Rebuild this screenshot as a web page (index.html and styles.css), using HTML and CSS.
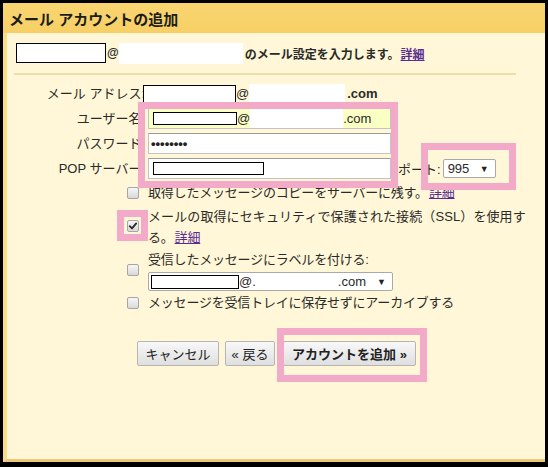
FILE: index.html
```html
<!DOCTYPE html>
<html lang="ja">
<head>
<meta charset="utf-8">
<title>メール アカウントの追加</title>
<link rel="stylesheet" href="styles.css">
</head>
<body>
<div class="frame">
  <div class="header">メール アカウントの追加</div>
  <div class="panel">
    <div class="intro">
      <span class="redact intro-box"></span>
      <span class="at-bold">@</span>
      <span class="white intro-white"></span>
      <span class="intro-text">のメール設定を入力します。</span>
      <a class="link" href="#">詳細</a>
    </div>
    <div class="sep"></div>
    <div class="form">
      <div class="row r25">
        <div class="lab">メール アドレス:</div>
        <div class="fld email-fld">
          <span class="redact email-box"></span>
          <span class="at">@</span>
          <span class="white email-white"></span>
          <span class="dom">.com</span>
        </div>
      </div>
      <div class="row r25">
        <div class="lab">ユーザー名:</div>
        <div class="fld">
          <div class="input autofill">
            <span class="redact user-box"></span>
            <span class="at">@</span>
            <span class="white user-white"></span>
            <span class="plain-dom">.com</span>
          </div>
        </div>
      </div>
      <div class="row r25">
        <div class="lab">パスワード:</div>
        <div class="fld">
          <div class="input"><span class="dots">••••••••</span></div>
        </div>
      </div>
      <div class="row r25">
        <div class="lab">POP サーバー:</div>
        <div class="fld">
          <div class="input"><span class="redact pop-box"></span></div>
          <span class="port-lab">ポート:</span>
          <div class="select port-select"><span>995</span><span class="arrow">▼</span></div>
        </div>
      </div>
      <div class="row r-cb1">
        <div class="lab cb-lab"><span class="cb"></span></div>
        <div class="fld txt">取得したメッセージのコピーをサーバーに残す。<a class="link" href="#">詳細</a></div>
      </div>
      <div class="row r-cb2">
        <div class="lab cb-lab"><span class="cb checked"><svg viewBox="0 0 12 12" width="12" height="12"><path d="M2.8 6.2 L5 8.4 L9.2 3.4" stroke="#2b2b2b" stroke-width="1.9" fill="none" stroke-linecap="round" stroke-linejoin="round"/></svg></span></div>
        <div class="fld txt block"><span class="wide">メールの取得にセキュリティで保護された接続（SSL）を使用す</span><br>る。<a class="link" href="#">詳細</a></div>
      </div>
      <div class="row r-cb3">
        <div class="lab cb-lab"><span class="cb"></span></div>
        <div class="fld txt block">
          <div class="line">受信したメッセージにラベルを付ける:</div>
          <div class="select label-select">
            <span class="redact label-box"></span>
            <span class="at">@.</span>
            <span class="white label-white"></span>
            <span class="plain-dom">.com</span>
            <span class="arrow">▼</span>
          </div>
        </div>
      </div>
      <div class="row r-cb4">
        <div class="lab cb-lab"><span class="cb"></span></div>
        <div class="fld txt">メッセージを受信トレイに保存せずにアーカイブする</div>
      </div>
    </div>
    <div class="buttons">
      <button class="btn btn-cancel">キャンセル</button>
      <button class="btn btn-back">« 戻る</button>
      <button class="btn btn-add">アカウントを追加 »</button>
    </div>
  </div>
  <div class="mark mark-fields"></div>
  <div class="mark mark-port"></div>
  <div class="mark mark-ssl"></div>
  <div class="mark mark-add"></div>
</div>
</body>
</html>
```

FILE: styles.css
```css
* { box-sizing: border-box; }
html, body { margin: 0; padding: 0; background: #000; }
body {
  width: 548px;
  height: 467px;
  overflow: hidden;
  font-family: "Liberation Sans", "Noto Sans CJK JP", sans-serif;
  font-size: 13px;
  color: #2a2a2a;
}
.frame {
  position: relative;
  width: 548px;
  height: 467px;
  border: 3px solid #000;
  border-bottom-width: 5px;
  display: flex;
  flex-direction: column;
  background: #fff7d7;
}
.header {
  flex: none;
  height: 30px;
  padding: 4px 0 0 6px;
  line-height: 26px;
  font-size: 15px;
  font-weight: bold;
  color: #1c1c1c;
  background: linear-gradient(#f9d570, #f7cf66);
}
.panel {
  flex: 1;
  border-left: 4px solid #fadd88;
  border-bottom: 3px solid #eac978;
  background: #fff7d7;
}
.intro {
  display: flex;
  align-items: center;
  height: 22px;
  margin: 9px 0 0 9px;
  font-size: 12px;
  font-weight: bold;
}
.redact { display: block; flex: none; background: #fff; border: 1px solid #000; }
.white { display: block; flex: none; background: #fff; }
.intro-box { width: 90px; height: 20px; }
.at-bold { margin-left: 1px; }
.intro-white { width: 124px; height: 21px; }
.intro-text { margin-left: 2px; }
.link { color: #5a2c91; text-decoration: underline; margin-left: 1px; }
.sep { width: 502px; height: 2px; margin: 9px 0 0 7px; background: #ebdfa9; }
.form { margin-top: 6px; }
.row { display: flex; }
.lab {
  flex: none;
  width: 138px;
  text-align: right;
  white-space: nowrap;
}
.fld { flex: none; width: 395px; display: flex; align-items: center; }
.r25 { height: 25px; align-items: center; }
.r25 .lab { line-height: 25px; }
.email-fld { margin-left: -2px; }
.email-box { width: 93px; height: 18px; }
.email-white { width: 96px; height: 19px; }
.dom { font-weight: bold; margin-left: 2px; }
.input {
  display: flex;
  align-items: center;
  width: 243px;
  height: 21px;
  margin-left: 3px;
  padding-left: 4px;
  border: 1px solid #c2c2c2;
  border-top-color: #9c9c9c;
  background: #fff;
}
.autofill { background: #faffc4; }
.user-box { width: 84px; height: 13px; }
.user-white { width: 93px; align-self: stretch; }
.dots { margin-left: -2px; font-weight: bold; color: #222; letter-spacing: 0; }
.pop-box { width: 111px; height: 13px; }
.port-lab { margin-left: 7px; white-space: nowrap; }
.select {
  display: flex;
  align-items: center;
  background: #fff;
  border: 1px solid #a9a9a9;
  border-radius: 2px;
}
.port-select {
  width: 53px;
  height: 19px;
  margin-left: 2px;
  padding: 0 6px 0 4px;
  justify-content: space-between;
}
.arrow { font-size: 9px; color: #222; }
.cb-lab { display: flex; align-items: center; justify-content: flex-end; padding-right: 6px; }
.cb {
  display: block;
  width: 12px;
  height: 12px;
  border: 1px solid #a6a6a6;
  border-radius: 2px;
  background: linear-gradient(#f6f6f6, #d9d9d9);
}
.cb svg { display: block; margin: -1px 0 0 -1px; }
.txt { padding-left: 3px; letter-spacing: -0.2px; white-space: nowrap; }
.block { display: block; }
.wide { letter-spacing: 0.1px; }
.r-cb1 { height: 23px; }
.r-cb1 .fld { line-height: 23px; }
.r-cb2 { height: 44px; }
.r-cb2 .fld { padding-top: 2px; line-height: 21px; }
.r-cb3 { height: 44px; }
.r-cb3 .fld { padding-top: 2px; }
.line { line-height: 20px; height: 20px; }
.label-select {
  width: 245px;
  height: 19px;
  margin-top: 2px;
  padding: 0 6px 0 2px;
  letter-spacing: 0;
}
.label-box { width: 88px; height: 14px; }
.label-white { width: 82px; align-self: stretch; }
.label-select .arrow { margin-left: auto; }
.r-cb4 { height: 22px; }
.r-cb4 .fld { line-height: 22px; }
.buttons { display: flex; margin: 27px 0 0 130px; }
.btn {
  height: 25px;
  padding: 0;
  border: 1px solid #b5b5b5;
  border-radius: 2px;
  background: linear-gradient(#f8f8f8, #dfdfdf);
  font-family: "Liberation Sans", "Noto Sans CJK JP", sans-serif;
  font-size: 13px;
  color: #222;
  display: flex;
  align-items: center;
  justify-content: center;
}
.btn-cancel { width: 82px; }
.btn-back { width: 50px; margin-left: 6px; }
.btn-add { width: 133px; margin-left: 8px; font-weight: bold; }
.mark { position: absolute; border: 7px solid #f3a9c8; }
.mark-fields { left: 135px; top: 99px; width: 260px; height: 86px; }
.mark-port { left: 418px; top: 140px; width: 95px; height: 47px; }
.mark-ssl { left: 114px; top: 207px; width: 31px; height: 31px; }
.mark-add { left: 274px; top: 325px; width: 150px; height: 54px; }
```
